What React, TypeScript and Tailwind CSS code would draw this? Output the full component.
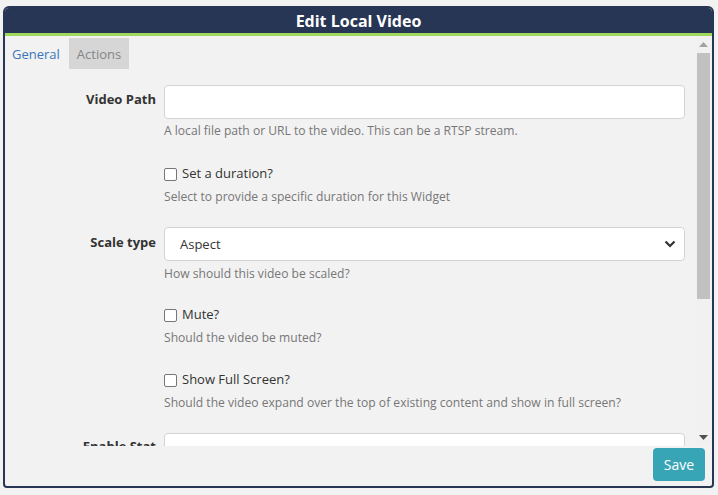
import React from "react";

const FONT = { fontFamily: '"Open Sans", "Noto Sans", Arial, sans-serif' };

function Checkbox() {
  return (
    <span className="inline-block w-[13px] h-[13px] rounded-[2px] border border-[#767676] bg-white shrink-0" />
  );
}

function Help({ children, top = "mt-[3px]" }: { children: React.ReactNode; top?: string }) {
  return <p className={`${top} text-[12.1px] leading-[18px] text-[#777]`}>{children}</p>;
}

export default function App() {
  return (
    <div className="w-[718px] h-[495px] bg-[#f2f2f2] pt-[6px] pl-[3px]" style={FONT}>
      <div className="w-[711px] h-[482px] flex flex-col border-2 border-[#283655] rounded-t-[6px] rounded-b-[4px] overflow-hidden bg-[#f2f2f2]">
        {/* Header */}
        <div className="h-[25px] shrink-0 bg-[#283655] flex items-center justify-center">
          <h1 className="text-white font-bold text-[16px] leading-[20px] mt-[1px]">Edit Local Video</h1>
        </div>
        <div className="h-[3px] shrink-0 bg-[#a0d85e]" />

        {/* Body */}
        <div className="flex h-[410px] shrink-0">
          <div className="flex-1 overflow-hidden">
            <div className="flex mt-[2px] text-[13px]">
              <div className="pl-[7px] pr-[9px] h-[31px] pt-[2px] flex items-center text-[#3a76b8]">General</div>
              <div className="px-[8px] h-[31px] pt-[2px] flex items-center bg-[#d6d6d6] text-[#858585]">Actions</div>
            </div>

            <div className="mt-[16px] text-[13px] text-[#333]">
              {/* Video Path */}
              <div className="flex">
                <label className="w-[151px] text-right font-bold pt-[5px] leading-[18px]">Video Path</label>
                <div className="ml-[8px] flex-1 mr-[10px]">
                  <div className="h-[34px] bg-white border border-[#d4d4d4] rounded-[4px]" />
                  <Help>A local file path or URL to the video. This can be a RTSP stream.</Help>
                </div>
              </div>

              {/* Duration */}
              <div className="flex mt-[24px]">
                <div className="w-[151px]" />
                <div className="ml-[8px] flex-1 mr-[10px]">
                  <div className="flex items-center gap-[5px] h-[20px] text-[13px]">
                    <Checkbox />
                    <span>Set a duration?</span>
                  </div>
                  <Help top="mt-[4px]">Select to provide a specific duration for this Widget</Help>
                </div>
              </div>

              {/* Scale type */}
              <div className="flex mt-[21px]">
                <label className="w-[151px] text-right font-bold pt-[6px] leading-[18px]">Scale type</label>
                <div className="ml-[8px] flex-1 mr-[10px]">
                  <div className="h-[34px] bg-white border border-[#d4d4d4] rounded-[4px] flex items-center justify-between pl-[15px] pr-[8px] text-[13px] text-[#333]">
                    <span className="pt-[2px]">Aspect</span>
                    <svg width="12" height="8" viewBox="0 0 12 8">
                      <path d="M1.5 1.5 L6 6 L10.5 1.5" fill="none" stroke="#333" strokeWidth="2.2" />
                    </svg>
                  </div>
                  <Help top="mt-[4px]">How should this video be scaled?</Help>
                </div>
              </div>

              {/* Mute */}
              <div className="flex mt-[22px]">
                <div className="w-[151px]" />
                <div className="ml-[8px] flex-1 mr-[10px]">
                  <div className="flex items-center gap-[5px] h-[20px] text-[13px]">
                    <Checkbox />
                    <span>Mute?</span>
                  </div>
                  <Help top="mt-[4px]">Should the video be muted?</Help>
                </div>
              </div>

              {/* Full screen */}
              <div className="flex mt-[23px]">
                <div className="w-[151px]" />
                <div className="ml-[8px] flex-1 mr-[10px]">
                  <div className="flex items-center gap-[5px] h-[20px] text-[13px]">
                    <Checkbox />
                    <span>Show Full Screen?</span>
                  </div>
                  <Help top="mt-[4px]">Should the video expand over the top of existing content and show in full screen?</Help>
                </div>
              </div>

              {/* Enable Stat */}
              <div className="flex mt-[21px]">
                <label className="w-[151px] text-right font-bold pt-[4px] leading-[18px] whitespace-nowrap">Enable Stat</label>
                <div className="ml-[8px] flex-1 mr-[10px]">
                  <div className="h-[34px] bg-white border border-[#d4d4d4] rounded-[4px]" />
                </div>
              </div>
            </div>
          </div>

          {/* Scrollbar */}
          <div className="w-[17px] shrink-0 bg-[#f1f1f1] flex flex-col items-center">
            <div className="h-[17px] flex items-center justify-center">
              <svg width="9" height="5" viewBox="0 0 9 5">
                <path d="M0 5 L4.5 0 L9 5 Z" fill="#a3a3a3" />
              </svg>
            </div>
            <div className="w-[13px] h-[246px] bg-[#c1c1c1]" />
            <div className="flex-1" />
            <div className="h-[17px] flex items-center justify-center">
              <svg width="9" height="5" viewBox="0 0 9 5">
                <path d="M0 0 L4.5 5 L9 0 Z" fill="#505050" />
              </svg>
            </div>
          </div>
        </div>

        {/* Footer */}
        <div className="flex-1 flex items-start justify-end pr-[7px] pt-[2px]">
          <button className="w-[52px] h-[33px] bg-[#38a5b7] text-white text-[14px] rounded-[4px]">Save</button>
        </div>
      </div>
    </div>
  );
}
